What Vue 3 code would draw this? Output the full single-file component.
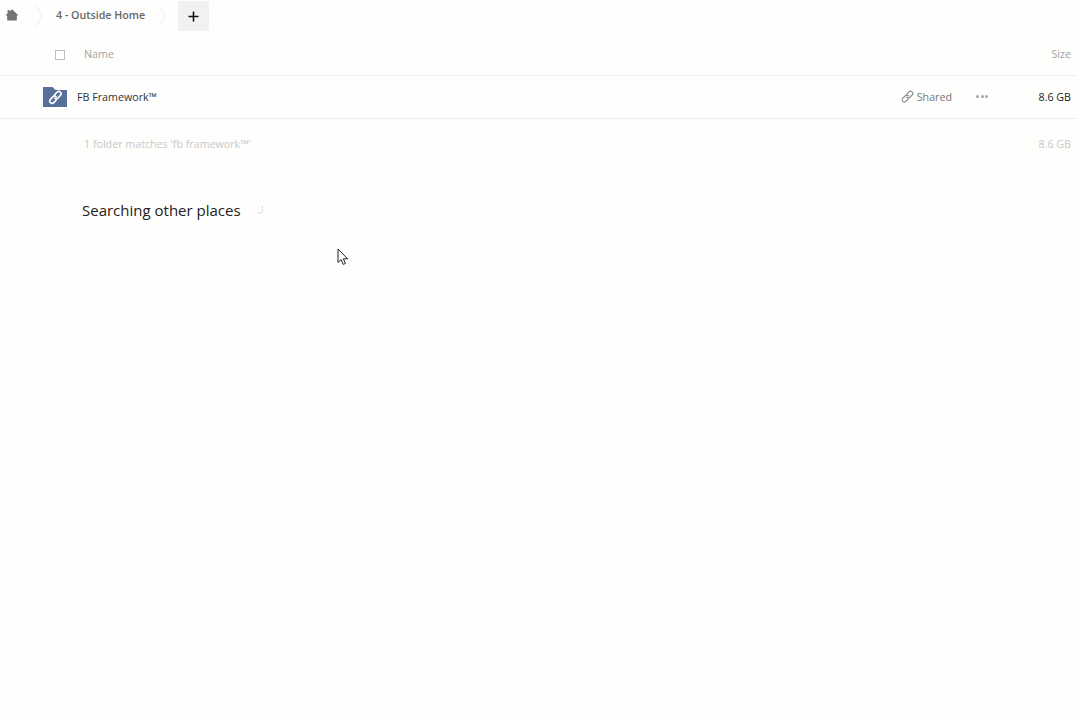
<script setup>
const files = [{ name: 'FB Framework™', size: '8.6 GB' }]
</script>

<template>
  <div class="page">
    <nav class="crumbs">
      <svg class="home" viewBox="0 0 14 14" width="14" height="14">
        <path d="M7 1.2 L13.6 7.4 H11.8 V12.6 H2.2 V7.4 H.4 L2.6 5.3 V2 H4.4 V3.6 Z" fill="#737373" />
      </svg>
      <svg class="chevron first" viewBox="0 0 8 24" width="8" height="24">
        <path d="M1 1 L7 12 L1 23" fill="none" stroke="#efefed" stroke-width="1" />
      </svg>
      <span class="crumb">4 - Outside Home</span>
      <svg class="chevron second" viewBox="0 0 8 24" width="8" height="24">
        <path d="M1 1 L7 12 L1 23" fill="none" stroke="#efefed" stroke-width="1" />
      </svg>
      <button class="add">
        <svg viewBox="0 0 12 12" width="11" height="11">
          <path d="M6 .5 V11.5 M.5 6 H11.5" stroke="#111" stroke-width="1.7" fill="none" />
        </svg>
      </button>
    </nav>

    <div class="head row-grid">
      <span class="check"></span>
      <span class="head-name">Name</span>
      <span class="head-size">Size</span>
    </div>

    <div v-for="file in files" :key="file.name" class="file row-grid">
      <svg class="folder" viewBox="0 0 24 20" width="24" height="20">
        <path d="M0 0 H9.5 L12.5 3 H24 V20 H0 Z" fill="#56709a" />
        <g fill="none" stroke="#fff" stroke-width="1.6" stroke-linecap="round">
          <path d="M11.4 8 L14 5.2 a2.3 2.3 0 0 1 3.4 3.2 L15 11 a2.3 2.3 0 0 1 -3.2 .2" />
          <path d="M13.2 9.8 a2.3 2.3 0 0 0 -3.2 -.2 L7.4 12.4 a2.3 2.3 0 0 0 3.4 3.2 L13.2 13" />
        </g>
      </svg>
      <span class="file-name">{{ file.name }}</span>
      <span class="shared">
        <svg viewBox="0 0 14 14" width="13" height="13">
          <g fill="none" stroke="#8a8a8a" stroke-width="1.2" stroke-linecap="round">
            <path d="M6 4.6 L8.6 2 a2.4 2.4 0 0 1 3.4 3.4 L9.6 7.8 a2.4 2.4 0 0 1 -3.4 0" />
            <path d="M8 6.2 a2.4 2.4 0 0 0 -3.4 0 L2 8.8 a2.4 2.4 0 0 0 3.4 3.4 L8 9.6" />
          </g>
        </svg>
        Shared
      </span>
      <span class="more"><i></i><i></i><i></i></span>
      <span class="file-size">{{ file.size }}</span>
    </div>

    <div class="summary row-grid">
      <span class="summary-text">1 folder matches 'fb framework™'</span>
      <span class="summary-size">8.6 GB</span>
    </div>

    <h2 class="searching">
      Searching other places
      <svg class="spinner" viewBox="0 0 6 10" width="6" height="10">
        <path d="M4.5 1 A4 4 0 0 1 1 8" fill="none" stroke="#cfcfcd" stroke-width="1" />
      </svg>
    </h2>

    <svg class="cursor" viewBox="0 0 12 18" width="12" height="18">
      <path d="M1 1 V14.4 L4.1 11.6 L6.2 16.4 L8.4 15.4 L6.3 10.8 H10.6 Z" fill="#fff" stroke="#222" stroke-width="1" />
    </svg>
  </div>
</template>

<style scoped>
.page {
  position: relative;
  width: 1077px;
  height: 720px;
  overflow: hidden;
  background: #fefefc;
  font-family: "Open Sans", "Liberation Sans", sans-serif;
  color: #222;
}

.crumbs {
  display: flex;
  align-items: center;
  height: 31px;
}

.home {
  margin-left: 5px;
  margin-bottom: 1px;
}

.chevron.first {
  margin-left: 16px;
}

.crumb {
  margin-left: 13px;
  margin-bottom: 1px;
  font-size: 10.7px;
  font-weight: 600;
  color: #666;
  white-space: nowrap;
}

.chevron.second {
  margin-left: 13px;
}

.add {
  display: flex;
  align-items: center;
  justify-content: center;
  align-self: flex-end;
  width: 31px;
  height: 30px;
  margin-left: 12px;
  padding: 0;
  border: 0;
  background: #f1f1f0;
}

.row-grid {
  display: flex;
  align-items: center;
  box-sizing: border-box;
  border-bottom: 1px solid #eeeeec;
}

.head {
  height: 45px;
  padding-top: 2px;
  padding-left: 55px;
  padding-right: 6px;
  font-size: 10.7px;
  color: #a3a3a3;
}

.check {
  width: 8px;
  height: 8px;
  margin-top: 2px;
  border: 1px solid #bdbdbd;
}

.head-name {
  margin-left: 19px;
}

.head-size {
  margin-left: auto;
}

.file {
  height: 43px;
  padding-bottom: 1px;
  padding-left: 43px;
  padding-right: 6px;
  font-size: 10.7px;
}

.folder {
  flex: none;
  margin-top: 1px;
}

.file-name {
  margin-left: 10px;
  color: #333;
}

.shared {
  display: flex;
  align-items: center;
  gap: 3px;
  margin-left: auto;
  color: #777;
}

.more {
  display: flex;
  gap: 1.5px;
  margin-left: 24px;
}

.more i {
  width: 3px;
  height: 3px;
  border-radius: 50%;
  background: #a5a5a5;
}

.file-size {
  width: 54px;
  margin-left: 29px;
  text-align: right;
  color: #222;
  white-space: nowrap;
}

.summary {
  height: 52px;
  padding-bottom: 2px;
  padding-left: 84px;
  padding-right: 6px;
  border-bottom: 0;
  font-size: 10.7px;
  color: #c8c8c8;
}

.summary-size {
  margin-left: auto;
}

.searching {
  display: flex;
  align-items: center;
  margin: 29px 0 0 82px;
  font-size: 15px;
  line-height: 20px;
  font-weight: 400;
  color: #222;
}

.spinner {
  margin-left: 16px;
}

.cursor {
  position: absolute;
  left: 337px;
  top: 248px;
}
</style>
